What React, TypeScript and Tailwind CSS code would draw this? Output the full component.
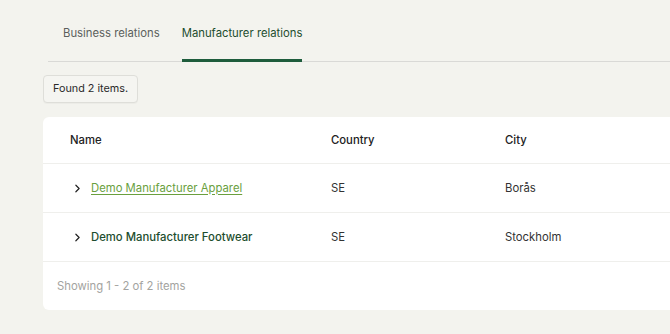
import { ChevronRight } from 'lucide-react';

interface Row {
  name: string;
  country: string;
  city: string;
  link?: boolean;
}

const rows: Row[] = [
  { name: 'Demo Manufacturer Apparel', country: 'SE', city: 'Borås', link: true },
  { name: 'Demo Manufacturer Footwear', country: 'SE', city: 'Stockholm' },
];

export default function App() {
  return (
    <div
      className="h-[334px] w-[670px] overflow-hidden bg-[#f3f3ee] text-[#222]"
      style={{ fontFamily: 'Inter, "Noto Sans", sans-serif' }}
    >
      {/* Tabs */}
      <div className="ml-[48px] flex h-[62px] border-b border-[#d9d9d6] pl-[15px] text-[11.3px]">
        <div className="flex items-center pt-[5px] text-[#5b5f5c]">Business relations</div>
        <div className="relative ml-[22px] flex items-center pt-[5px] text-[#1d4d2e]">
          Manufacturer relations
          <span className="absolute -bottom-px left-0 right-0 h-[3px] bg-[#1e5c3c]" />
        </div>
      </div>

      <div className="ml-[43px] w-[660px]">
        <div className="mt-[13px] inline-flex h-[28px] items-center rounded-[4px] border border-[#deded9] bg-[#f5f5f1] px-[9px] text-[10.8px] text-[#2a2a2a] shadow-[0_1px_1px_rgba(0,0,0,0.03)]">
          Found 2 items.
        </div>

        {/* Table card */}
        <div className="mt-[14px] rounded-[6px] bg-white text-[11.3px]">
          <div className="flex h-[47px] items-center border-b border-[#efefec] font-medium text-[#222]">
            <div className="w-[288px] pl-[27px]">Name</div>
            <div className="w-[174px]">Country</div>
            <div>City</div>
          </div>
          {rows.map((row) => (
            <div key={row.name} className="flex h-[49px] items-center border-b border-[#efefec]">
              <div className="flex w-[288px] items-center pl-[28px]">
                <ChevronRight className="h-[13px] w-[13px] text-[#222]" strokeWidth={2.25} />
                <span
                  className={
                    row.link
                      ? 'ml-[7px] text-[#6a9f3e] underline underline-offset-2'
                      : 'ml-[7px] font-medium text-[#1d4d2e]'
                  }
                >
                  {row.name}
                </span>
              </div>
              <div className="w-[174px] text-[#333]">{row.country}</div>
              <div className="text-[#333]">{row.city}</div>
            </div>
          ))}
          <div className="flex h-[48px] items-center pl-[14px] text-[#a3a3a0]">Showing 1 - 2 of 2 items</div>
        </div>
      </div>
    </div>
  );
}
